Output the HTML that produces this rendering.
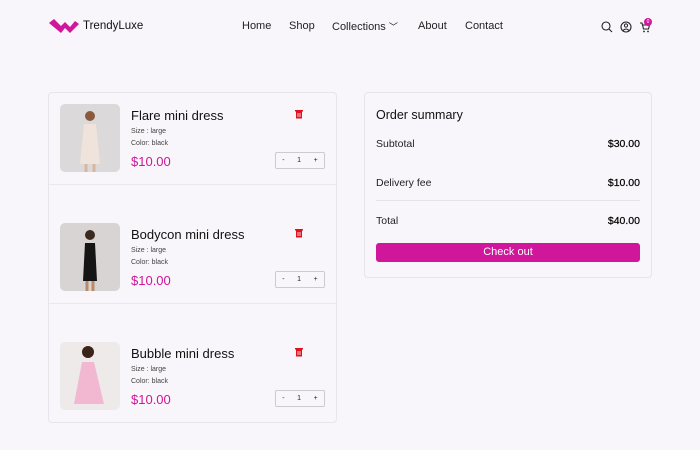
<!DOCTYPE html>
<html><head><meta charset="utf-8"><style>
*{box-sizing:border-box;margin:0;padding:0}
html,body{width:700px;height:442px}
body{background:#f8f6fa;font-family:"Liberation Sans",sans-serif;color:#111;position:relative;overflow:hidden}
.abs{position:absolute}
.nav a{position:absolute;top:20px;font-size:11px;color:#222}
.card{position:absolute;background:#f8f6fa;border:1px solid #e8e4ea;border-radius:4px}
.item{position:absolute;left:0;width:287px;height:119px}
.img{position:absolute;left:11px;top:11px;width:60px;height:68px;border-radius:5px;overflow:hidden}
.t{position:absolute;left:82px;top:15px;font-size:13px;color:#111}
.s{position:absolute;left:82px;font-size:7px;color:#444}
.p{position:absolute;left:82px;top:61px;font-size:13px;color:#d0169a}
.q{position:absolute;left:226px;top:59px;width:50px;height:17px;border:1px solid #ccc;border-radius:2px;font-size:7px;display:flex;justify-content:space-around;align-items:center;color:#222}
.tr{position:absolute;left:246px;top:17px;width:8px;height:9px}
.dv{position:absolute;left:0;width:287px;top:91px;border-top:1px solid #ece7ee}
.row{position:absolute;left:11px;right:11px;font-size:10.5px;display:flex;justify-content:space-between;color:#222}
.row b{font-weight:normal;color:#000;-webkit-text-stroke:.2px #000}
</style></head><body>
<svg class="abs" style="left:49px;top:18px" width="30" height="16" viewBox="0 0 30 16"><path d="M0 5 L5 1 L12 8 L16 4 L21 9 L26 3 L30 6 L21 15 L16 10 L12 15 Z" fill="#d0169a"/></svg>
<div class="abs" style="left:83px;top:20px;font-size:11.5px">TrendyLuxe</div>
<div class="nav"><a style="left:242px">Home</a><a style="left:289px">Shop</a><a style="left:332px">Collections <span style="font-size:9px">﹀</span></a><a style="left:418px">About</a><a style="left:465px">Contact</a></div>
<svg class="abs" style="left:600px;top:20px" width="52" height="14" viewBox="0 0 52 14"><circle cx="6" cy="6" r="4" fill="none" stroke="#222" stroke-width="1.1"/><path d="M9 9 L12 12" stroke="#222" stroke-width="1.1"/><circle cx="26" cy="7" r="5" fill="none" stroke="#222" stroke-width="1.1"/><circle cx="26" cy="5.5" r="1.6" fill="none" stroke="#222"/><path d="M23 10.5 Q26 7.5 29 10.5" fill="none" stroke="#222"/><path d="M40 3 L42 3 L43.5 9 L48.5 9 L49.5 5 L42.7 5" fill="none" stroke="#222" stroke-width="1.1"/><circle cx="44" cy="11.5" r=".9" fill="#222"/><circle cx="48" cy="11.5" r=".9" fill="#222"/></svg>
<div class="abs" style="left:644px;top:18px;width:8px;height:8px;border-radius:50%;background:#d0169a;color:#fff;font-size:5px;text-align:center;line-height:8px">0</div>

<div class="card" style="left:48px;top:92px;width:289px;height:331px">
 <div class="item" style="top:0">
  <div class="img" style="background:#dcd9da"><svg width="60" height="68"><circle cx="30" cy="12" r="5" fill="#8a5a40"/><path d="M24 20 L36 20 L40 60 L20 60 Z" fill="#efe3dc"/><path d="M26 60 L26 68 M34 60 L34 68" stroke="#d8b7a0" stroke-width="3"/></svg></div>
  <div class="t">Flare mini dress</div><div class="s" style="top:35px">Size : large</div><div class="s" style="top:47px">Color: black</div><div class="p">$10.00</div>
  <svg class="tr" viewBox="0 0 8 9"><rect x="1" y="1.5" width="6" height="7" fill="#e0101e"/><rect x="0" y="0" width="8" height="1.5" fill="#e0101e"/><path d="M3 3V7M5 3V7" stroke="#fff" stroke-width=".8"/></svg>
  <div class="q"><span>-</span><span>1</span><span>+</span></div>
  <div class="dv"></div>
 </div>
 <div class="item" style="top:119px">
  <div class="img" style="background:#d8d4d3"><svg width="60" height="68"><circle cx="30" cy="12" r="5" fill="#3a2a22"/><path d="M25 20 L35 20 L37 58 L23 58 Z" fill="#151515"/><path d="M27 58 L27 68 M33 58 L33 68" stroke="#b98a6a" stroke-width="3"/></svg></div>
  <div class="t">Bodycon mini dress</div><div class="s" style="top:35px">Size : large</div><div class="s" style="top:47px">Color: black</div><div class="p">$10.00</div>
  <svg class="tr" viewBox="0 0 8 9"><rect x="1" y="1.5" width="6" height="7" fill="#e0101e"/><rect x="0" y="0" width="8" height="1.5" fill="#e0101e"/><path d="M3 3V7M5 3V7" stroke="#fff" stroke-width=".8"/></svg>
  <div class="q"><span>-</span><span>1</span><span>+</span></div>
  <div class="dv"></div>
 </div>
 <div class="item" style="top:238px">
  <div class="img" style="background:#eeeaea"><svg width="60" height="68"><circle cx="28" cy="10" r="6" fill="#3a2418"/><path d="M22 20 L34 20 L44 62 L14 62 Z" fill="#f2b8d2"/></svg></div>
  <div class="t">Bubble mini dress</div><div class="s" style="top:35px">Size : large</div><div class="s" style="top:47px">Color: black</div><div class="p">$10.00</div>
  <svg class="tr" viewBox="0 0 8 9"><rect x="1" y="1.5" width="6" height="7" fill="#e0101e"/><rect x="0" y="0" width="8" height="1.5" fill="#e0101e"/><path d="M3 3V7M5 3V7" stroke="#fff" stroke-width=".8"/></svg>
  <div class="q"><span>-</span><span>1</span><span>+</span></div>
 </div>
</div>

<div class="card" style="left:364px;top:92px;width:288px;height:186px">
 <div class="abs" style="left:11px;top:15px;font-size:12.5px">Order summary</div>
 <div class="row" style="top:45px"><span>Subtotal</span><b>$30.00</b></div>
 <div class="row" style="top:84px"><span>Delivery fee</span><b>$10.00</b></div>
 <div class="abs" style="left:11px;right:11px;top:107px;border-top:1px solid #e6e2e8"></div>
 <div class="row" style="top:122px"><span>Total</span><b>$40.00</b></div>
 <div class="abs" style="left:11px;right:11px;top:150px;height:19px;background:#d0169a;border-radius:3px;color:#fff;font-size:11px;text-align:center;line-height:19px">Check out</div>
</div>
</body></html>
